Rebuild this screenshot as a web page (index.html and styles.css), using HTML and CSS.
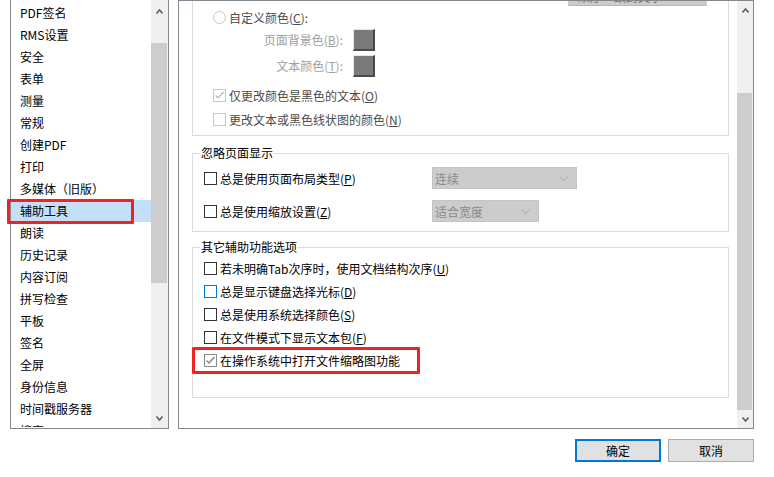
FILE: index.html
```html
<!DOCTYPE html>
<html lang="zh-CN">
<head>
<meta charset="utf-8">
<title>首选项 - 辅助工具</title>
<link rel="stylesheet" href="styles.css">
</head>
<body>
<div class="dialog">
  <div class="main">
    <div class="nav">
      <ul class="nav-list">
        <li>PDF签名</li>
        <li>RMS设置</li>
        <li>安全</li>
        <li>表单</li>
        <li>测量</li>
        <li>常规</li>
        <li>创建PDF</li>
        <li>打印</li>
        <li>多媒体（旧版）</li>
        <li class="selected mark">辅助工具</li>
        <li>朗读</li>
        <li>历史记录</li>
        <li>内容订阅</li>
        <li>拼写检查</li>
        <li>平板</li>
        <li>签名</li>
        <li>全屏</li>
        <li>身份信息</li>
        <li>时间戳服务器</li>
        <li class="partial">搜索</li>
      </ul>
      <div class="vscroll nav-scroll">
        <div class="sb-btn sb-up nav-up"><svg width="7" height="5" viewBox="0 0 7 5"><polyline points="0.5,4.5 3.5,1 6.5,4.5" fill="none" stroke="#606060" stroke-width="1.6"/></svg></div>
        <div class="sb-track nav-track-a"></div>
        <div class="sb-thumb nav-thumb"></div>
        <div class="sb-track sb-fill"></div>
        <div class="sb-btn sb-down nav-down"><svg width="7" height="5" viewBox="0 0 7 5"><polyline points="0.5,0.5 3.5,4 6.5,0.5" fill="none" stroke="#606060" stroke-width="1.6"/></svg></div>
      </div>
    </div>

    <div class="panel">
      <div class="panel-content">
        <div class="grp grp-cut">
          <div class="peek"><span class="peek-text">顺序一致的文字</span></div>
          <div class="opt-row radio-row">
            <span class="radio"></span>
            <span class="txt-mid">自定义颜色(<u>C</u>):</span>
          </div>
          <div class="swatch-row">
            <span class="swatch-label">页面背景色(<u>B</u>):</span>
            <span class="swatch"></span>
          </div>
          <div class="swatch-row">
            <span class="swatch-label">文本颜色(<u>T</u>):</span>
            <span class="swatch"></span>
          </div>
          <div class="opt-row chk-row gap-top">
            <span class="chk chk-dis"><svg width="11" height="11" viewBox="0 0 11 11"><polyline points="1.5,5.5 4,8 9.5,2" fill="none" stroke="#b4b4b4" stroke-width="1.2"/></svg></span>
            <span class="txt-mid">仅更改颜色是黑色的文本(<u>O</u>)</span>
          </div>
          <div class="opt-row chk-row">
            <span class="chk chk-dis"></span>
            <span class="txt-mid">更改文本或黑色线状图的颜色(<u>N</u>)</span>
          </div>
        </div>

        <fieldset class="grp grp-2">
          <legend>忽略页面显示</legend>
          <div class="grp-body body-2">
            <div class="sel-row">
              <label class="sel-label"><span class="chk"></span><span>总是使用页面布局类型(<u>P</u>)</span></label>
              <div class="dropdown dd-wide"><span>连续</span><svg width="9" height="5" viewBox="0 0 9 5"><polyline points="0.5,0.5 4.5,4.5 8.5,0.5" fill="none" stroke="#a8a8a8" stroke-width="1"/></svg></div>
            </div>
            <div class="sel-row">
              <label class="sel-label"><span class="chk"></span><span>总是使用缩放设置(<u>Z</u>)</span></label>
              <div class="dropdown dd-narrow"><span>适合宽度</span><svg width="9" height="5" viewBox="0 0 9 5"><polyline points="0.5,0.5 4.5,4.5 8.5,0.5" fill="none" stroke="#a8a8a8" stroke-width="1"/></svg></div>
            </div>
          </div>
        </fieldset>

        <fieldset class="grp grp-3">
          <legend>其它辅助功能选项</legend>
          <div class="grp-body body-3">
            <label class="list-row"><span class="chk"></span><span>若未明确Tab次序时，使用文档结构次序(<u>U</u>)</span></label>
            <label class="list-row"><span class="chk chk-focus"></span><span>总是显示键盘选择光标(<u>D</u>)</span></label>
            <label class="list-row"><span class="chk"></span><span>总是使用系统选择颜色(<u>S</u>)</span></label>
            <label class="list-row"><span class="chk"></span><span>在文件模式下显示文本包(<u>F</u>)</span></label>
            <label class="list-row mark"><span class="chk chk-on"><svg width="11" height="11" viewBox="0 0 11 11"><polyline points="1.5,5.5 4,8 9.5,2" fill="none" stroke="#808080" stroke-width="1.3"/></svg></span><span>在操作系统中打开文件缩略图功能</span></label>
          </div>
        </fieldset>
      </div>
      <div class="vscroll panel-scroll">
        <div class="sb-btn sb-up panel-up"><svg width="7" height="5" viewBox="0 0 7 5"><polyline points="0.5,4.5 3.5,1 6.5,4.5" fill="none" stroke="#606060" stroke-width="1.6"/></svg></div>
        <div class="sb-track panel-track-a"></div>
        <div class="sb-thumb panel-thumb"></div>
        <div class="sb-btn sb-down panel-down"><svg width="7" height="5" viewBox="0 0 7 5"><polyline points="0.5,0.5 3.5,4 6.5,0.5" fill="none" stroke="#606060" stroke-width="1.6"/></svg></div>
      </div>
    </div>
  </div>

  <div class="buttons">
    <button class="btn btn-default">确定</button>
    <button class="btn">取消</button>
  </div>
</div>
</body>
</html>
```

FILE: styles.css
```css
*, *::before, *::after { box-sizing: border-box; }

html, body {
  margin: 0;
  padding: 0;
  background: #ffffff;
}

body {
  font-family: "Noto Sans CJK SC", "Noto Sans", sans-serif;
  font-size: 12px;
  color: #000;
  width: 774px;
  height: 477px;
  overflow: hidden;
}

u { text-decoration: underline; text-underline-offset: 1px; }

.dialog {
  display: flex;
  flex-direction: column;
}

.main {
  display: flex;
  gap: 9px;
  padding-left: 10px;
  height: 429px;
}

/* ---------- left navigation ---------- */
.nav {
  width: 159px;
  height: 429px;
  border: 1px solid #828790;
  border-top: none;
  display: flex;
}

.nav-list {
  list-style: none;
  margin: 0;
  padding: 2px 0 0 0;
  width: 140px;
}

.nav-list li {
  height: 22px;
  line-height: 22px;
  padding-left: 9px;
  white-space: nowrap;
}

.nav-list li.selected { background: #c4dff8; }

.nav-list li.partial {
  height: 7px;
  overflow: hidden;
}

.mark { position: relative; }

.nav-list li.mark::after {
  content: "";
  position: absolute;
  left: -4px;
  top: -1px;
  width: 127px;
  height: 25px;
  border: 3px solid #f02222;
  border-radius: 1px;
}

/* ---------- scrollbars ---------- */
.vscroll {
  width: 17px;
  background: #f0f0f0;
  display: flex;
  flex-direction: column;
}

.sb-btn {
  display: flex;
  align-items: center;
  justify-content: center;
}

.sb-btn svg { display: block; }

.sb-thumb {
  background: #cdcdcd;
  margin: 0 1px 0 0;
}

.sb-fill { flex: 1; }

.nav-up { height: 22px; }
.nav-track-a { height: 21px; }
.nav-thumb { height: 240px; }
.nav-down { height: 19px; }

.panel-up { height: 18px; }
.panel-track-a { height: 74px; }
.panel-thumb { height: 317px; }
.panel-down { height: 18px; }

/* ---------- right panel ---------- */
.panel {
  width: 576px;
  height: 429px;
  border: 1px solid #828790;
  display: flex;
}

.panel-content {
  flex: 1;
  overflow: hidden;
  padding: 0 8px 0 13px;
}

.panel-scroll { width: 16px; }

.grp {
  border: 1px solid #dcdcdc;
  margin: 0;
  padding: 0;
  min-width: 0;
}

.grp legend {
  margin-left: 7px;
  padding: 0 1px;
  line-height: 16px;
  height: 16px;
}

/* group 1: top cut off by scrolling */
.grp-cut {
  border-top: none;
  height: 135px;
  padding-top: 0;
}

.peek {
  margin-left: 375px;
  width: 139px;
  height: 5px;
  background: #cccccc;
  border-bottom: 1px solid #b8b8b8;
  overflow: hidden;
}

.peek-text {
  display: block;
  margin-top: -12px;
  padding-left: 10px;
  line-height: 16px;
  color: #707070;
}

.opt-row {
  display: flex;
  align-items: center;
  padding-left: 20px;
  gap: 3px;
}

.radio-row { height: 22px; }
.chk-row { height: 24px; }
.gap-top { margin-top: 3px; }

.txt-mid { color: #4c4c4c; }

.radio {
  width: 13px;
  height: 13px;
  border: 1px solid #c6c6c6;
  border-radius: 50%;
  background: #fff;
}

.swatch-row {
  display: flex;
  align-items: flex-start;
  height: 26px;
  padding: 1px 0 0 60px;
  gap: 8px;
}

.swatch-label {
  width: 90px;
  text-align: right;
  color: #a0a0a0;
  line-height: 22px;
  white-space: nowrap;
}

.swatch {
  width: 22px;
  height: 22px;
  margin-left: 2px;
  background: #7a7a7a;
  border-top: 1px solid #e8e8e8;
  border-left: 1px solid #e8e8e8;
  border-right: 2px solid #4a4a4a;
  border-bottom: 2px solid #4a4a4a;
}

.chk {
  width: 13px;
  height: 13px;
  flex: none;
  border: 1px solid #333333;
  background: #fff;
  display: flex;
  align-items: center;
  justify-content: center;
}

.chk svg { display: block; }

.chk-dis { border-color: #c8c8c8; }
.chk-focus { border-color: #0078d7; }
.chk-on { border-color: #8a8a8a; }

/* group 2 */
.grp-2 { margin-top: 9px; }

.grp-body { padding-left: 11px; }

.body-2 {
  padding-top: 6px;
  padding-bottom: 9px;
  display: flex;
  flex-direction: column;
  gap: 11px;
}

.sel-row {
  display: flex;
  align-items: center;
  height: 22px;
}

.sel-label {
  width: 228px;
  display: flex;
  align-items: center;
  gap: 3px;
  white-space: nowrap;
}

.dropdown {
  height: 22px;
  background: #cccccc;
  border: 1px solid #c4c4c4;
  color: #8a8a8a;
  display: flex;
  align-items: center;
  justify-content: space-between;
  padding: 0 8px 0 2px;
}

.dd-wide { width: 145px; }
.dd-narrow { width: 107px; }

/* group 3 */
.grp-3 { margin-top: 7px; }

.body-3 {
  padding-top: 2px;
  padding-bottom: 25px;
}

.list-row {
  display: flex;
  align-items: center;
  gap: 3px;
  height: 23px;
  white-space: nowrap;
}

.list-row.mark::after {
  content: "";
  position: absolute;
  left: -12px;
  top: -2px;
  width: 228px;
  height: 27px;
  border: 3px solid #f02222;
  border-radius: 1px;
}

/* ---------- buttons ---------- */
.buttons {
  display: flex;
  justify-content: flex-end;
  gap: 7px;
  margin-top: 10px;
  padding-right: 20px;
}

.btn {
  width: 86px;
  height: 23px;
  font-family: "Noto Sans CJK SC", "Noto Sans", sans-serif;
  font-size: 12px;
  color: #000;
  background: #e1e1e1;
  border: 1px solid #adadad;
  padding: 0;
  margin: 0;
}

.btn-default { border: 2px solid #0078d7; }
```
